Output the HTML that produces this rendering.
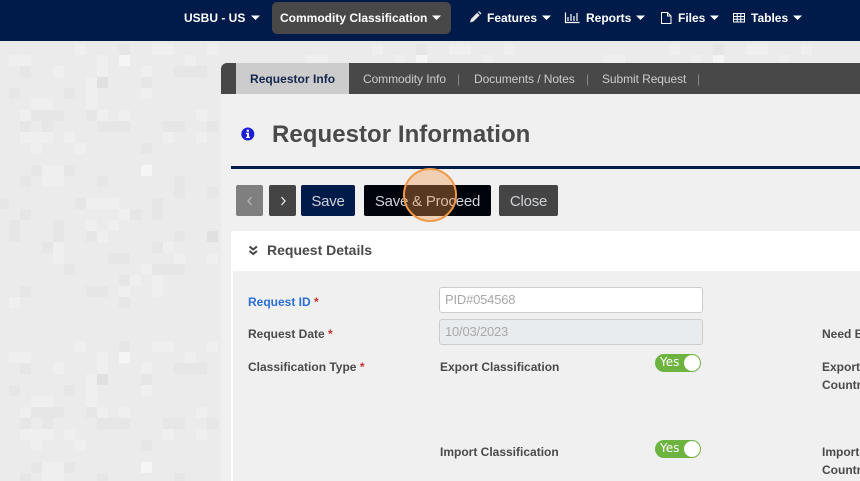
<!DOCTYPE html>
<html><head><meta charset="utf-8"><title>Requestor Information</title>
<style>
html,body{margin:0;padding:0;width:860px;height:481px;overflow:hidden;background:#ebebeb;font-family:"Liberation Sans",sans-serif}
.a{position:absolute;white-space:nowrap}
.n{color:#fff;font-weight:bold;font-size:12px;line-height:16px;top:10px}
.t{color:#ccc;font-size:12px;line-height:16px;top:71px;letter-spacing:-.08px}
.s{color:#8a8a8a;font-size:12px;line-height:14px;top:72px}
.b{top:185px;height:31px;line-height:33px;border-radius:2px;text-align:center;color:#cfd2d8;font-size:15px;letter-spacing:-.22px}
.l{color:#4a4a4a;font-weight:bold;font-size:12px;line-height:15px}
.r{color:#c9302c}
.i{left:439px;width:262px;height:24px;border:1px solid #ccc;border-radius:3px;font-size:13px;line-height:24px;color:#a8a8a8;text-indent:5px;letter-spacing:-.2px}
.y{left:655px;width:46px;height:18px;border-radius:9px;background:#6db33f}
.y b{position:absolute;left:5px;top:0;font-family:"DejaVu Sans",sans-serif;font-weight:normal;font-size:12px;line-height:17px;color:#fff}
.y i{position:absolute;right:1px;top:1px;width:16px;height:16px;border-radius:50%;background:#fff}
</style></head><body>
<svg class="a" style="left:0;top:0" width="860" height="481">
<defs><pattern id="tp" patternUnits="userSpaceOnUse" x="0" y="44" width="297" height="297" viewBox="0 44 297 297">
<path fill="#e6e6e6" d="M31 165h11v11H31zM64 165h11v11H64zM20 176h11v11H20zM97 176h11v11H97zM75 198h11v11H75zM152 198h11v22h-11zM130 209h11v11h-11zM20 209h11v11H20zM53 220h11v22H53zM9 220h11v22H9zM86 231h11v11H86zM174 231h11v11h-11zM152 242h11v11h-11zM42 242h11v11H42zM108 253h22v11h-22zM64 264h11v11H64zM152 264h33v11h-33zM119 275h11v11h-11zM20 286h11v11H20zM86 286h22v11H86zM119 297h11v11h-11zM174 176h11v22h-11zM207 187h11v11h-11zM0 198h9v11H0zM119 44h11v11h-11zM20 66h11v11H20zM9 88h11v11H9zM64 88h11v11H64zM141 77h11v11h-11zM174 66h33v11h-33zM31 110h33v11H31zM86 110h11v11H86zM20 121h11v11H20zM42 121h11v11H42zM97 121h33v11H97zM163 121h22v11h-22zM207 121h11v11h-11zM141 143h11v11h-11z"/>
<path fill="#e0e0e0" d="M97 77h11v11H97zM207 231h11v11h-11z"/>
<path fill="#efefef" d="M42 165h22v22H42zM86 198h33v11H86zM119 209h11v11h-11zM86 220h11v11H86zM108 220h11v11h-11zM97 231h11v11H97zM53 242h11v22H53zM163 242h11v11h-11zM174 253h11v11h-11zM207 253h11v11h-11zM141 264h11v11h-11zM130 275h11v11h-11zM152 275h11v22h-11zM9 297h11v11H9zM119 286h11v11h-11zM75 44h11v11H75zM9 55h22v11H9zM97 55h11v22H97zM185 55h11v11h-11zM207 44h11v11h-11zM152 44h22v11h-22zM53 66h11v11H53zM141 66h11v11h-11zM141 88h11v11h-11zM86 77h11v33H86zM31 99h22v11H31zM97 110h11v11H97zM119 110h11v11h-11zM196 110h11v11h-11zM20 110h11v11H20zM64 132h11v11H64zM20 132h33v11H20zM163 132h11v11h-11zM196 132h11v11h-11zM31 143h11v11H31zM75 143h11v11H75z"/>
<path fill="#f5f5f5" d="M119 55h11v11h-11zM141 165h11v11h-11z"/>
</pattern></defs>
<rect x="0" y="41" width="860" height="440" fill="url(#tp)"/>
</svg>

<!-- nav -->
<div class="a" style="left:0;top:0;width:860px;height:41px;background:#001a49"></div>
<div class="a" style="left:272px;top:2px;width:179px;height:32px;border-radius:5px;background:#484848"></div>
<div class="a n" style="left:184px">USBU - US</div>
<div class="a n" style="left:280px">Commodity Classification</div>
<div class="a n" style="left:487px">Features</div>
<div class="a n" style="left:586px">Reports</div>
<div class="a n" style="left:678px">Files</div>
<div class="a n" style="left:751px">Tables</div>
<svg class="a" style="left:0;top:0" width="860" height="41" fill="#fff">
<path d="M251 15.500h9l-4.500 4.500zM432 15.500h9l-4.500 4.500zM542 15.500h9l-4.500 4.500zM636 15.500h9l-4.500 4.500zM710 15.500h9l-4.500 4.500zM793 15.500h9l-4.500 4.500z"/>
<path d="M470 22.500l1-3.500 6.200-6.200 2.500 2.500-6.200 6.200zM478 12l1-1 2.500 2.500-1 1z" fill="#e8e8e8"/>
<path d="M565.500 12.500v10h14M568 21v-4M571 21v-7M574 21v-5M577 21v-8" fill="none" stroke="#fff" stroke-width="1.200"/>
<path d="M661.500 12.500h6l3.500 3.500v7.500h-9.500zM667.500 12.500v3.500h3.500" fill="none" stroke="#fff" stroke-width="1"/>
<path d="M733.500 13.500h11v8.500h-11zM733.500 16.500h11M733.500 19.300h11M737.200 13.500v8.500M740.800 13.500v8.500" fill="none" stroke="#fff" stroke-width="1"/>
</svg>

<!-- panel -->
<div class="a" style="left:221px;top:63px;width:639px;height:418px;background:#f0f0f0;border-top-left-radius:6px"></div>
<div class="a" style="left:221px;top:63px;width:639px;height:31px;background:#484848;border-top-left-radius:6px"></div>
<div class="a" style="left:236px;top:63px;width:113px;height:31px;background:#ccc"></div>
<div class="a" style="left:250px;top:71px;color:#14264f;font-weight:bold;font-size:12px;line-height:16px;letter-spacing:.03px">Requestor Info</div>
<div class="a t" style="left:363px">Commodity Info</div>
<div class="a s" style="left:457px">|</div>
<div class="a t" style="left:474px">Documents / Notes</div>
<div class="a s" style="left:586px">|</div>
<div class="a t" style="left:602px">Submit Request</div>
<div class="a s" style="left:697px">|</div>

<svg class="a" style="left:241px;top:127px" width="14" height="14"><circle cx="6.800" cy="7" r="6.500" fill="#1a1fd6"/><path d="M5.700 2.700h2.300v2H5.700zM5 5.800h3v3.900h1v1.300H5V9.700h1V7.100H5z" fill="#fff"/></svg>
<div class="a" style="left:272px;top:120px;font-size:24px;line-height:30px;font-weight:bold;color:#4a4a4a;letter-spacing:.05px">Requestor Information</div>
<div class="a" style="left:231px;top:166px;width:629px;height:3px;background:#001a49"></div>

<!-- buttons -->
<div class="a b" style="left:236px;width:27px;background:#7f7f7f"></div>
<div class="a b" style="left:269px;width:27px;background:#444"></div>
<svg class="a" style="left:236px;top:185px" width="60" height="31"><path d="M15.500 12l-3.500 4 3.500 4" fill="none" stroke="#b5b5b5" stroke-width="1.300"/><path d="M45.500 12l3.500 4-3.500 4" fill="none" stroke="#eee" stroke-width="1.300"/></svg>
<div class="a b" style="left:301px;width:54px;background:#001a49">Save</div>
<div class="a b" style="left:364px;width:127px;background:#02040c">Save &amp; Proceed</div>
<div class="a b" style="left:499px;width:59px;background:#444">Close</div>
<div class="a" style="left:403px;top:168px;width:50px;height:50px;border:2px solid #ef9a4a;border-radius:50%;background:rgba(240,150,70,.36)"></div>

<!-- section -->
<div class="a" style="left:231px;top:231px;width:629px;height:250px;background:#fff;border-top-left-radius:3px"></div>
<div class="a" style="left:233px;top:271px;width:627px;height:210px;background:#f0f0f0"></div>
<svg class="a" style="left:248px;top:245px" width="11" height="12"><path d="M1.500 1.500l3.700 3 3.700-3M1.500 6l3.700 3 3.700-3" fill="none" stroke="#444" stroke-width="2"/></svg>
<div class="a" style="left:267px;top:241px;font-size:14px;line-height:18px;font-weight:bold;color:#4a4a4a">Request Details</div>

<div class="a l" style="left:248px;top:295px;color:#2a6fd6">Request ID <span class="r">*</span></div>
<div class="a l" style="left:248px;top:327px">Request Date <span class="r">*</span></div>
<div class="a l" style="left:248px;top:360px">Classification Type <span class="r">*</span></div>
<div class="a i" style="top:287px;background:#fff">PID#054568</div>
<div class="a i" style="top:319px;background:#e9ecef">10/03/2023</div>
<div class="a l" style="left:440px;top:360px">Export Classification</div>
<div class="a l" style="left:440px;top:445px">Import Classification</div>
<div class="a y" style="top:354px"><b>Yes</b><i></i></div>
<div class="a y" style="top:440px"><b>Yes</b><i></i></div>
<div class="a l" style="left:822px;top:327px">Need By</div>
<div class="a l" style="left:822px;top:360px">Export</div>
<div class="a l" style="left:822px;top:378px">Country</div>
<div class="a l" style="left:822px;top:445px">Import</div>
<div class="a l" style="left:822px;top:463px">Country</div>
</body></html>
